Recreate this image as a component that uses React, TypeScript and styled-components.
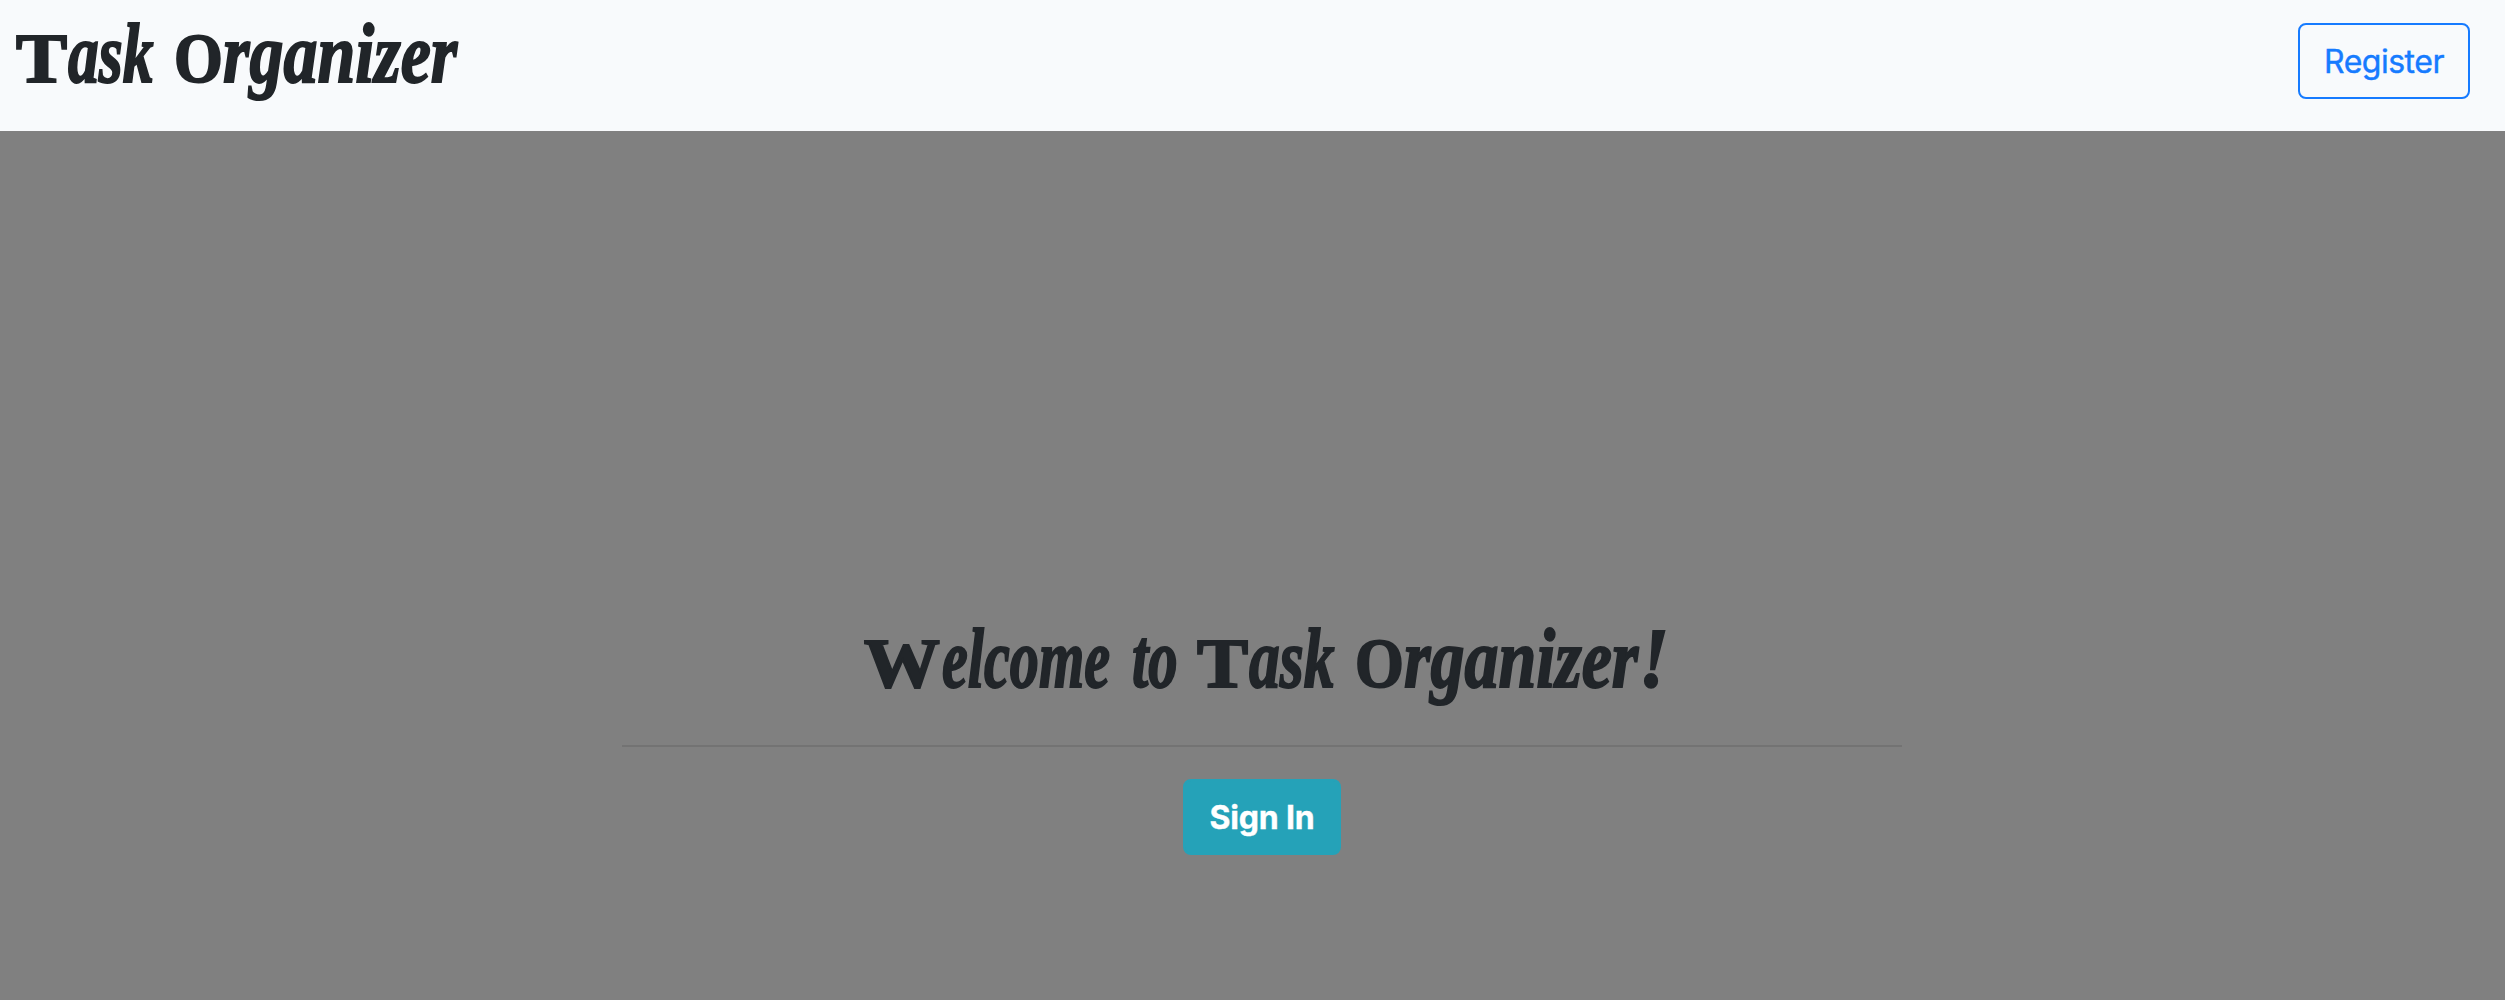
import React from 'react';
import styled, { createGlobalStyle } from 'styled-components';

const GlobalStyle = createGlobalStyle`
  *, *::before, *::after { box-sizing: border-box; }
  body { margin: 0; background: #808080; color: #212529; }
`;

const Page = styled.div`
  display: flex;
  flex-direction: column;
  height: 1000px;
  overflow: hidden;
  font-family: Inter, Roboto, sans-serif;
`;

const Navbar = styled.header`
  display: flex;
  justify-content: space-between;
  align-items: flex-start;
  flex: none;
  height: 131px;
  padding: 23px 35px 0 16px;
  background: #f8fafc;
`;

const Display = styled.h1<{ $top: number }>`
  margin: ${p => p.$top}px 0 0;
  height: 100px;
  line-height: 100px;
  font-family: 'Liberation Serif', serif;
  font-size: 0;
  font-weight: 700;
  white-space: nowrap;
`;

const Slot = styled.span<{ $width: number }>`
  display: inline-block;
  width: ${p => p.$width}px;
  white-space: pre;
`;

const Glyphs = styled.span<{ $scale: number; $cap?: boolean }>`
  display: inline-block;
  font-size: ${p => (p.$cap ? 69 : 85)}px;
  font-style: ${p => (p.$cap ? 'normal' : 'italic')};
  transform: scaleX(${p => p.$scale});
  transform-origin: left;
  -webkit-text-stroke: 2px currentColor;
`;

const Button = styled.button<{ $primary?: boolean }>`
  display: flex;
  align-items: center;
  justify-content: center;
  width: ${p => (p.$primary ? 158 : 172)}px;
  height: 76px;
  padding: 0;
  border: 2px solid ${p => (p.$primary ? '#25a2b8' : '#167bff')};
  border-radius: 8px;
  background: ${p => (p.$primary ? '#25a2b8' : 'transparent')};
  color: ${p => (p.$primary ? '#fff' : '#167bff')};
  font-family: Inter, Roboto, sans-serif;
  font-size: 32px;
  font-weight: ${p => (p.$primary ? 700 : 400)};
  letter-spacing: ${p => (p.$primary ? -0.2 : -0.5)}px;
  -webkit-text-stroke: 0.4px currentColor;
`;

const Main = styled.main`
  display: flex;
  flex-direction: column;
  align-items: center;
  width: 1280px;
  margin-left: 622px;
  padding-top: 477px;
`;

const Rule = styled.hr`
  width: 100%;
  height: 2px;
  margin: 37px 0 32px;
  border: 0;
  background: #737373;
`;

interface PartProps {
  text: string;
  width: number;
  scale: number;
  cap?: boolean;
}

const Part = ({ text, width, scale, cap }: PartProps) => (
  <Slot $width={width}>
    <Glyphs $scale={scale} $cap={cap}>{text}</Glyphs>
  </Slot>
);

const Name = () => (
  <>
    <Part text="T" width={52} scale={1.11} cap />
    <Part text="ask " width={106} scale={0.725} />
    <Part text="O" width={49} scale={0.91} cap />
    <Part text="rganizer" width={235} scale={0.8} />
  </>
);

export default function App() {
  return (
    <>
      <GlobalStyle />
      <Page>
        <Navbar>
          <Display $top={-20}><Name /></Display>
          <Button>Register</Button>
        </Navbar>
        <Main>
          <Display $top={0}>
            <Part text="W" width={78} scale={1.1} cap />
            <Part text="elcome " width={190} scale={0.685} />
            <Part text="to " width={65} scale={0.69} />
            <Name />
            <Part text="!" width={21} scale={0.9} />
          </Display>
          <Rule />
          <Button $primary>Sign In</Button>
        </Main>
      </Page>
    </>
  );
}
